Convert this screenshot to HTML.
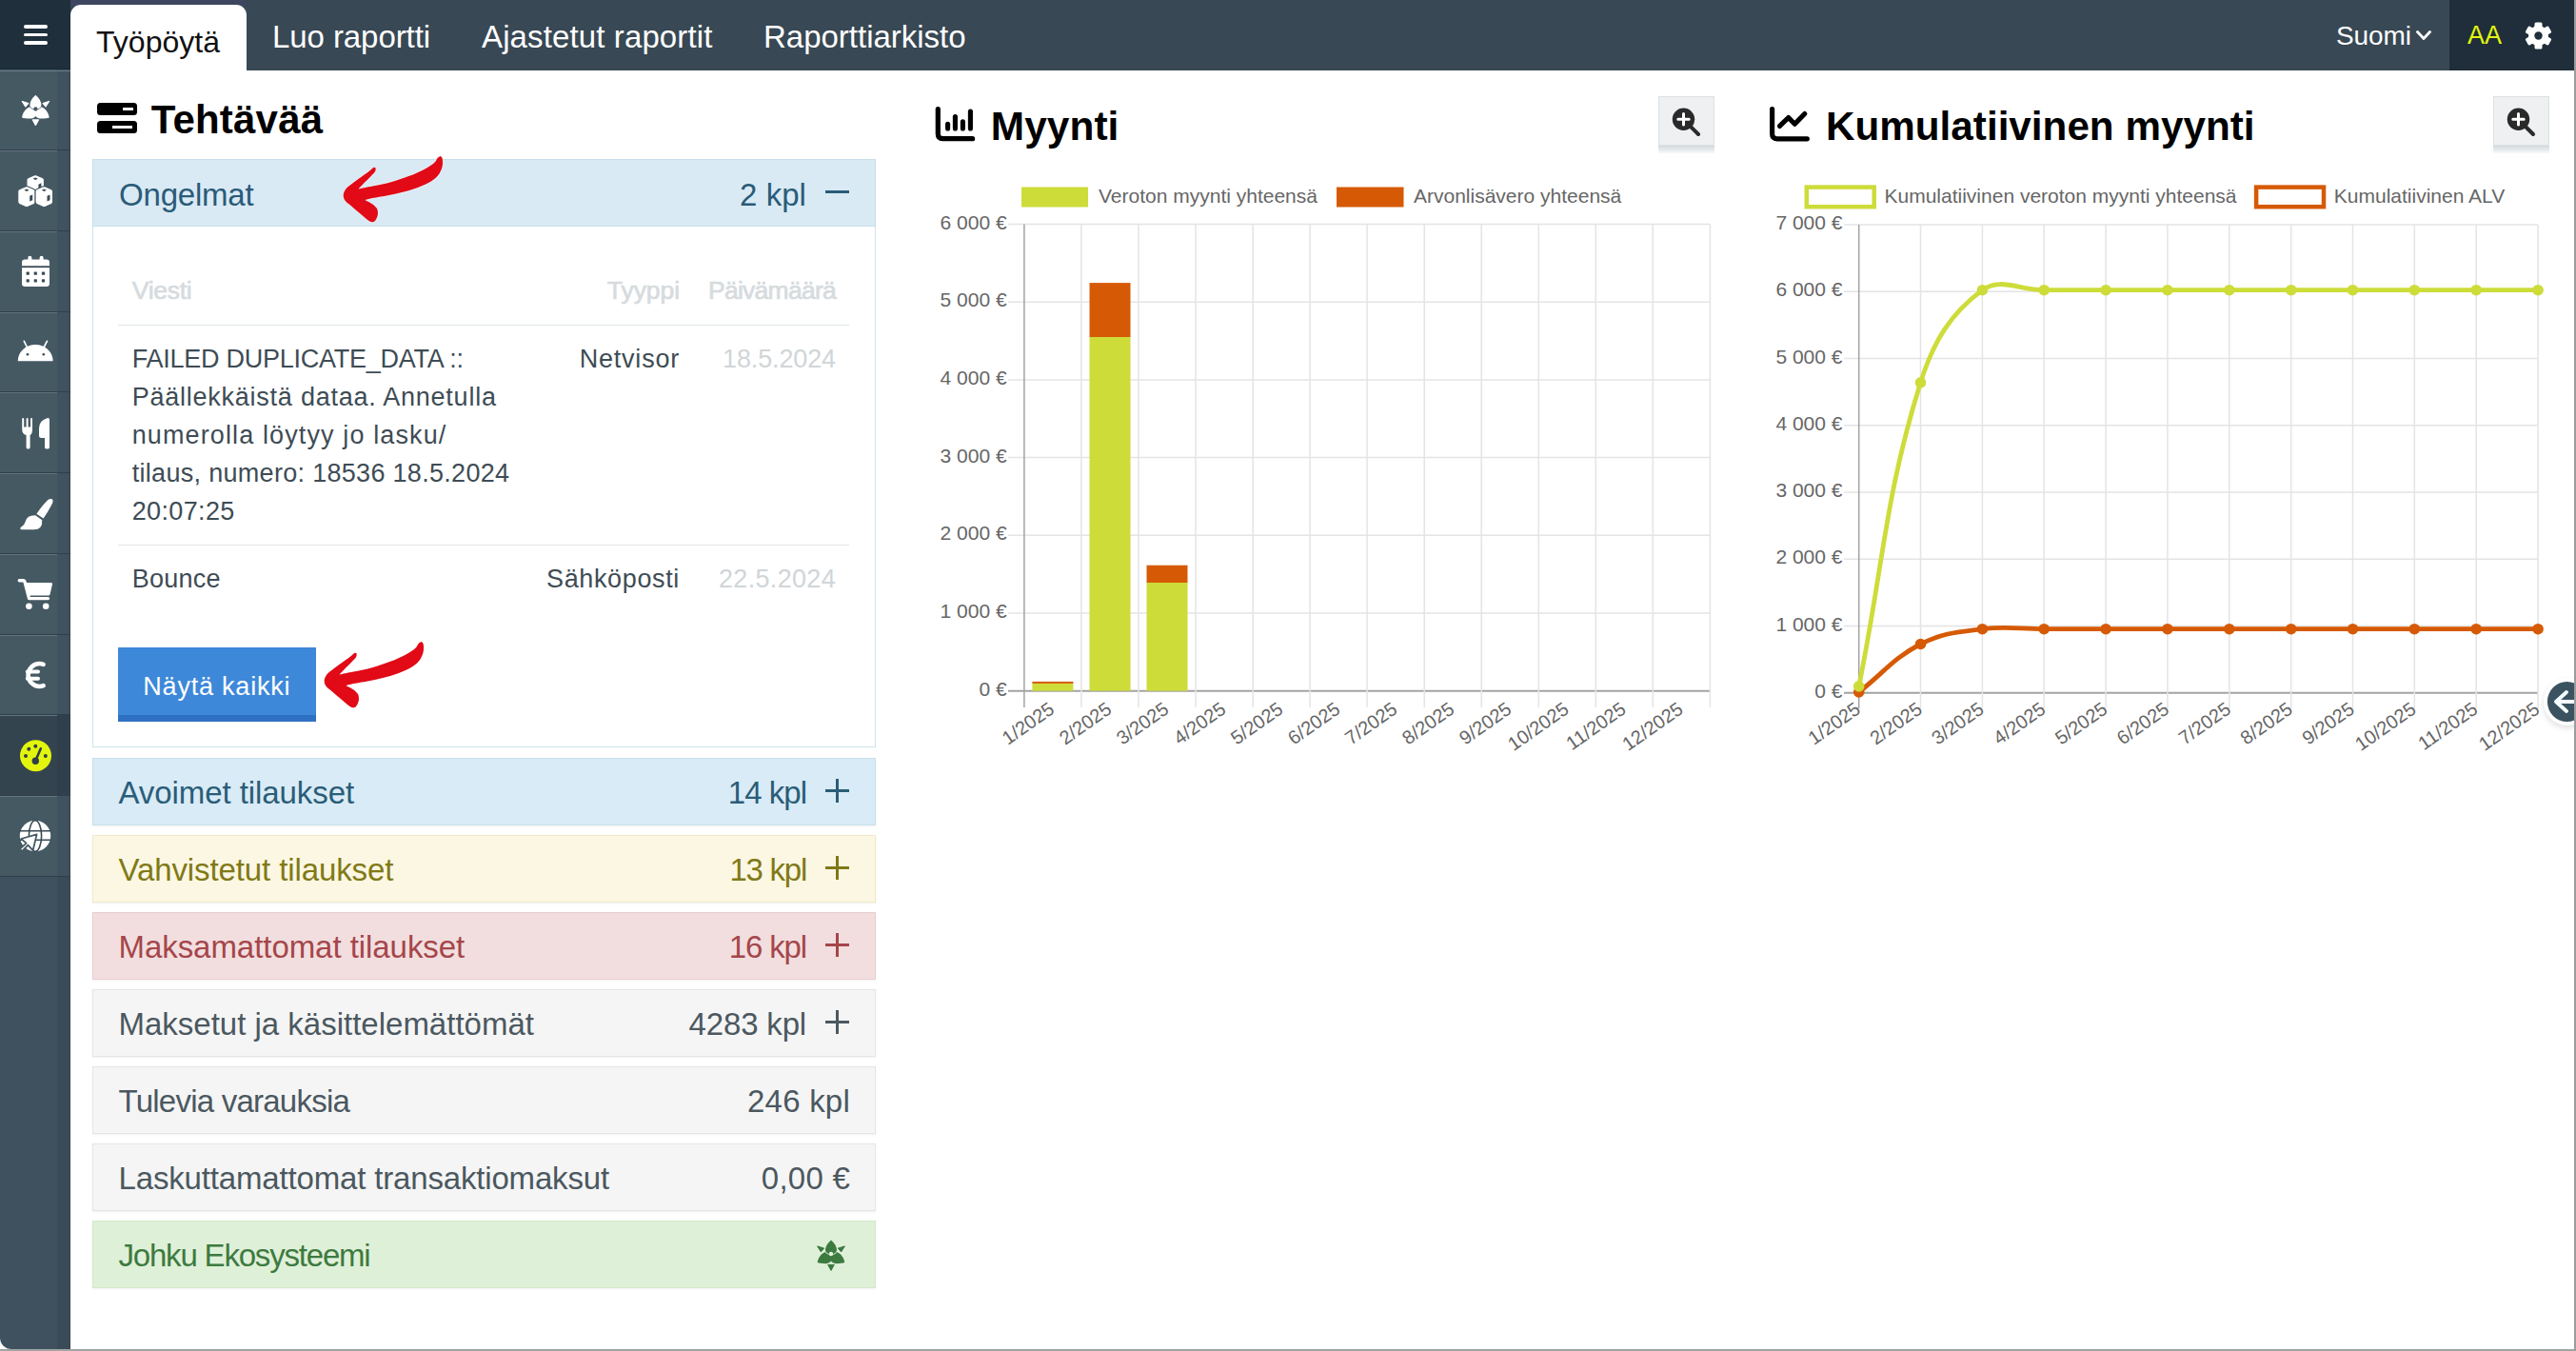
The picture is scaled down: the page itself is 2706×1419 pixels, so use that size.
<!DOCTYPE html>
<html><head><meta charset="utf-8"><style>
html,body{margin:0;padding:0;width:2706px;height:1419px;overflow:hidden;background:#fff;position:relative}
body{font-family:"Liberation Sans",sans-serif}
.t{position:absolute;line-height:1;white-space:nowrap}
svg text{font-family:"Liberation Sans",sans-serif}
</style></head><body>
<div style="position:absolute;left:0;top:0;width:74px;height:73px;background:#1f2f3b"></div>
<div style="position:absolute;left:25px;top:26.25px;width:25px;height:3.5px;border-radius:2px;background:#fff"></div>
<div style="position:absolute;left:25px;top:34.75px;width:25px;height:3.5px;border-radius:2px;background:#fff"></div>
<div style="position:absolute;left:25px;top:43.25px;width:25px;height:3.5px;border-radius:2px;background:#fff"></div>
<div style="position:absolute;left:0;top:73px;width:74px;height:1344px;background:linear-gradient(90deg,#3f515e 0,#3f515e 60px,#3a4b58 60px,#3a4b58 72px,#3d4750 72px);border-bottom-left-radius:12px"></div>
<div style="position:absolute;left:0;top:73px;width:74px;height:847.5px;background:linear-gradient(90deg,#455963 0,#455963 60px,#3f525f 60px,#3f525f 72px,#414a52 72px)"></div>
<div style="position:absolute;left:0;top:72px;width:74px;height:1px;background:#1b2a36"></div>
<div style="position:absolute;left:0;top:73.6px;width:74px;height:1.2px;background:#687b87"></div>
<div style="position:absolute;left:0;top:751.2px;width:74px;height:84.7px;background:linear-gradient(90deg,#34444f 0,#34444f 60px,#303f4b 60px)"></div>
<div style="position:absolute;left:0;top:157.4px;width:74px;height:1px;background:#2f404c"></div>
<div style="position:absolute;left:0;top:158.4px;width:60px;height:1px;background:#627480"></div>
<div style="position:absolute;left:0;top:242.1px;width:74px;height:1px;background:#2f404c"></div>
<div style="position:absolute;left:0;top:243.1px;width:60px;height:1px;background:#627480"></div>
<div style="position:absolute;left:0;top:326.8px;width:74px;height:1px;background:#2f404c"></div>
<div style="position:absolute;left:0;top:327.8px;width:60px;height:1px;background:#627480"></div>
<div style="position:absolute;left:0;top:411.4px;width:74px;height:1px;background:#2f404c"></div>
<div style="position:absolute;left:0;top:412.4px;width:60px;height:1px;background:#627480"></div>
<div style="position:absolute;left:0;top:496.1px;width:74px;height:1px;background:#2f404c"></div>
<div style="position:absolute;left:0;top:497.1px;width:60px;height:1px;background:#627480"></div>
<div style="position:absolute;left:0;top:580.8px;width:74px;height:1px;background:#2f404c"></div>
<div style="position:absolute;left:0;top:581.8px;width:60px;height:1px;background:#627480"></div>
<div style="position:absolute;left:0;top:665.5px;width:74px;height:1px;background:#2f404c"></div>
<div style="position:absolute;left:0;top:666.5px;width:60px;height:1px;background:#627480"></div>
<div style="position:absolute;left:0;top:750.2px;width:74px;height:1px;background:#2f404c"></div>
<div style="position:absolute;left:0;top:751.2px;width:60px;height:1px;background:#627480"></div>
<div style="position:absolute;left:0;top:834.8px;width:74px;height:1px;background:#2f404c"></div>
<div style="position:absolute;left:0;top:835.8px;width:60px;height:1px;background:#627480"></div>
<div style="position:absolute;left:0;top:919.5px;width:74px;height:1px;background:#2f404c"></div>
<div style="position:absolute;left:74px;top:0;width:2499px;height:73.6px;background:#384854"></div>
<div style="position:absolute;left:2573px;top:0;width:131px;height:73.6px;background:#1f2e3a"></div>
<div style="position:absolute;left:74px;top:0;width:185px;height:6px;background:#3d4560"></div>
<div style="position:absolute;left:74px;top:5px;width:185px;height:69px;background:#fff;border-radius:11px 11px 0 0"></div>
<div class="t" style="top:27.6px;font-size:32px;color:#111;font-weight:400;letter-spacing:0.018px;left:101.0px;">Työpöytä</div>
<div class="t" style="top:21.8px;font-size:33px;color:#fff;font-weight:400;letter-spacing:-0.078px;left:286.0px;">Luo raportti</div>
<div class="t" style="top:21.8px;font-size:33px;color:#fff;font-weight:400;letter-spacing:0.123px;left:506.0px;">Ajastetut raportit</div>
<div class="t" style="top:21.8px;font-size:33px;color:#fff;font-weight:400;letter-spacing:-0.01px;left:802.0px;">Raporttiarkisto</div>
<div class="t" style="top:24.3px;font-size:28px;color:#fff;font-weight:400;letter-spacing:-0.075px;left:2454.0px;">Suomi</div>
<svg style="position:absolute;left:2537px;top:30.5px" width="18" height="12" viewBox="0 0 18 12"><path d="M2.5 2.5 L9 9.5 L15.5 2.5" fill="none" stroke="#fff" stroke-width="2.8" stroke-linecap="round" stroke-linejoin="round"/></svg>
<div class="t" style="top:24.1px;font-size:27px;color:#e3f50f;font-weight:400;left:2592.0px;">AA</div>
<div style="position:absolute;left:0;top:1417px;width:2706px;height:2px;background:#a3a3a3"></div>
<div style="position:absolute;left:2704px;top:0;width:2px;height:1419px;background:#9c9c9c"></div>
<div style="position:absolute;left:102px;top:108.2px;width:42px;height:13.2px;background:#000;border-radius:3.5px"></div>
<div style="position:absolute;left:102px;top:127.2px;width:42px;height:12.8px;background:#000;border-radius:3.5px"></div>
<div style="position:absolute;left:128.5px;top:113.3px;width:11px;height:3.2px;background:#fff"></div>
<div style="position:absolute;left:117.8px;top:131.9px;width:21.5px;height:3.2px;background:#fff"></div>
<div class="t" style="top:105.0px;font-size:42px;color:#000;font-weight:700;letter-spacing:0.202px;left:158.7px;">Tehtävää</div>
<div style="position:absolute;left:97px;top:167px;width:821px;height:616px;border:1px solid #cfe5ec;background:#fff"></div>
<div style="position:absolute;left:97px;top:167px;width:823px;height:71px;background:#d9eaf5;border-bottom:1px solid #c6dde9;box-sizing:border-box;border:1px solid #c9dfea"></div>
<div class="t" style="top:188.1px;font-size:33px;color:#2b5b78;font-weight:400;letter-spacing:-0.197px;left:125.0px;">Ongelmat</div>
<div class="t" style="top:188.1px;font-size:33px;color:#2b5b78;font-weight:400;letter-spacing:0.056px;right:1859.0px;text-align:right;">2 kpl</div>
<div style="position:absolute;left:867px;top:200.3px;width:25px;height:3px;background:#2b5b78"></div>
<div class="t" style="top:291.6px;font-size:26.5px;color:#d6dbde;font-weight:400;letter-spacing:-0.255px;left:138.7px;-webkit-text-stroke:0.7px #d6dbde;">Viesti</div>
<div class="t" style="top:291.6px;font-size:26.5px;color:#d6dbde;font-weight:400;letter-spacing:-0.066px;right:1992.0px;text-align:right;-webkit-text-stroke:0.7px #d6dbde;">Tyyppi</div>
<div class="t" style="top:291.6px;font-size:26.5px;color:#d6dbde;font-weight:400;letter-spacing:-0.741px;right:1828.0px;text-align:right;-webkit-text-stroke:0.7px #d6dbde;">Päivämäärä</div>
<div style="position:absolute;left:124px;top:340.5px;width:768px;height:1.5px;background:#dfe5e8"></div>
<div class="t" style="top:364.1px;font-size:27px;color:#3e4c55;font-weight:400;letter-spacing:-0.255px;left:138.7px;">FAILED DUPLICATE_DATA ::</div>
<div class="t" style="top:404.1px;font-size:27px;color:#3e4c55;font-weight:400;letter-spacing:0.758px;left:138.7px;">Päällekkäistä dataa. Annetulla</div>
<div class="t" style="top:444.1px;font-size:27px;color:#3e4c55;font-weight:400;letter-spacing:1.118px;left:138.7px;">numerolla löytyy jo lasku/</div>
<div class="t" style="top:484.1px;font-size:27px;color:#3e4c55;font-weight:400;letter-spacing:0.304px;left:138.7px;">tilaus, numero: 18536 18.5.2024</div>
<div class="t" style="top:524.1px;font-size:27px;color:#3e4c55;font-weight:400;letter-spacing:0.361px;left:138.7px;">20:07:25</div>
<div class="t" style="top:364.1px;font-size:27px;color:#3e4c55;font-weight:400;letter-spacing:0.784px;right:1992.0px;text-align:right;">Netvisor</div>
<div class="t" style="top:364.1px;font-size:27px;color:#d0d5d8;font-weight:400;letter-spacing:-0.125px;right:1828.0px;text-align:right;">18.5.2024</div>
<div style="position:absolute;left:124px;top:571.5px;width:768px;height:1.5px;background:#dfe5e8"></div>
<div class="t" style="top:595.3px;font-size:27px;color:#3e4c55;font-weight:400;letter-spacing:0.237px;left:138.7px;">Bounce</div>
<div class="t" style="top:595.3px;font-size:27px;color:#3e4c55;font-weight:400;letter-spacing:0.641px;right:1992.0px;text-align:right;">Sähköposti</div>
<div class="t" style="top:595.3px;font-size:27px;color:#d0d5d8;font-weight:400;letter-spacing:0.319px;right:1828.0px;text-align:right;">22.5.2024</div>
<div style="position:absolute;left:124px;top:680px;width:208px;height:77.5px;background:#3d88d9;box-sizing:border-box;border-bottom:7px solid #2e70c2"></div>
<div class="t" style="top:707.5px;font-size:27px;color:#fff;font-weight:400;letter-spacing:0.788px;left:150.3px;">Näytä kaikki</div>
<div style="position:absolute;left:97px;top:795.5px;width:823px;height:71px;background:#d9ebf6;border:1px solid #c9dfeb;box-sizing:border-box;box-shadow:0 1px 2px rgba(0,0,0,.06)"></div>
<div class="t" style="top:815.9px;font-size:33px;color:#2a5d78;font-weight:400;letter-spacing:-0.079px;left:124.5px;">Avoimet tilaukset</div>
<div class="t" style="top:815.9px;font-size:33px;color:#2a5d78;font-weight:400;letter-spacing:-0.977px;right:1859.0px;text-align:right;">14 kpl</div>
<div style="position:absolute;left:867px;top:829.0px;width:25px;height:3px;background:#2a5d78"></div>
<div style="position:absolute;left:878px;top:818.0px;width:3px;height:25px;background:#2a5d78"></div>
<div style="position:absolute;left:97px;top:876.5px;width:823px;height:71px;background:#fcf7e3;border:1px solid #efe9c9;box-sizing:border-box;box-shadow:0 1px 2px rgba(0,0,0,.06)"></div>
<div class="t" style="top:896.9px;font-size:33px;color:#807916;font-weight:400;letter-spacing:-0.107px;left:124.5px;">Vahvistetut tilaukset</div>
<div class="t" style="top:896.9px;font-size:33px;color:#807916;font-weight:400;letter-spacing:-1.26px;right:1859.0px;text-align:right;">13 kpl</div>
<div style="position:absolute;left:867px;top:910.0px;width:25px;height:3px;background:#807916"></div>
<div style="position:absolute;left:878px;top:899.0px;width:3px;height:25px;background:#807916"></div>
<div style="position:absolute;left:97px;top:957.5px;width:823px;height:71px;background:#f2dedf;border:1px solid #e8ced0;box-sizing:border-box;box-shadow:0 1px 2px rgba(0,0,0,.06)"></div>
<div class="t" style="top:977.9px;font-size:33px;color:#a5464a;font-weight:400;letter-spacing:-0.055px;left:124.5px;">Maksamattomat tilaukset</div>
<div class="t" style="top:977.9px;font-size:33px;color:#a5464a;font-weight:400;letter-spacing:-1.144px;right:1859.0px;text-align:right;">16 kpl</div>
<div style="position:absolute;left:867px;top:991.0px;width:25px;height:3px;background:#a5464a"></div>
<div style="position:absolute;left:878px;top:980.0px;width:3px;height:25px;background:#a5464a"></div>
<div style="position:absolute;left:97px;top:1038.5px;width:823px;height:71px;background:#f5f5f5;border:1px solid #e5e5e5;box-sizing:border-box;box-shadow:0 1px 2px rgba(0,0,0,.06)"></div>
<div class="t" style="top:1058.9px;font-size:33px;color:#4b5860;font-weight:400;letter-spacing:-0.004px;left:124.5px;">Maksetut ja käsittelemättömät</div>
<div class="t" style="top:1058.9px;font-size:33px;color:#4b5860;font-weight:400;letter-spacing:-0.171px;right:1859.0px;text-align:right;">4283 kpl</div>
<div style="position:absolute;left:867px;top:1072.0px;width:25px;height:3px;background:#4b5860"></div>
<div style="position:absolute;left:878px;top:1061.0px;width:3px;height:25px;background:#4b5860"></div>
<div style="position:absolute;left:97px;top:1119.5px;width:823px;height:71px;background:#f5f5f5;border:1px solid #e5e5e5;box-sizing:border-box;box-shadow:0 1px 2px rgba(0,0,0,.06)"></div>
<div class="t" style="top:1139.9px;font-size:33px;color:#4b5860;font-weight:400;letter-spacing:-0.763px;left:124.5px;">Tulevia varauksia</div>
<div class="t" style="top:1139.9px;font-size:33px;color:#4b5860;font-weight:400;letter-spacing:0.225px;right:1813.0px;text-align:right;">246 kpl</div>
<div style="position:absolute;left:97px;top:1200.5px;width:823px;height:71px;background:#f5f5f5;border:1px solid #e5e5e5;box-sizing:border-box;box-shadow:0 1px 2px rgba(0,0,0,.06)"></div>
<div class="t" style="top:1220.9px;font-size:33px;color:#4b5860;font-weight:400;letter-spacing:-0.164px;left:124.5px;">Laskuttamattomat transaktiomaksut</div>
<div class="t" style="top:1220.9px;font-size:33px;color:#4b5860;font-weight:400;letter-spacing:0.242px;right:1813.0px;text-align:right;">0,00 €</div>
<div style="position:absolute;left:97px;top:1281.5px;width:823px;height:71px;background:#dff0d8;border:1px solid #d3e8ca;box-sizing:border-box;box-shadow:0 1px 2px rgba(0,0,0,.06)"></div>
<div class="t" style="top:1301.9px;font-size:33px;color:#3d7a40;font-weight:400;letter-spacing:-1.194px;left:124.5px;">Johku Ekosysteemi</div>
<svg style="position:absolute;left:350px;top:155px" width="130" height="90" viewBox="0 0 1951 1351"><path d="M1690 135 C1695 142 1717 149 1722 175 C1727 201 1729 252 1722 290 C1715 328 1700 367 1680 400 C1660 433 1638 460 1600 490 C1562 520 1517 549 1450 580 C1383 611 1292 648 1200 675 C1108 702 997 725 900 745 C803 765 687 782 620 795 C553 808 520 820 500 825 C518 835 579 863 610 885 C641 907 669 929 685 955 C701 981 706 1012 705 1040 C704 1068 692 1103 680 1125 C668 1147 653 1166 635 1172 C617 1178 602 1180 570 1160 C538 1140 485 1092 440 1055 C395 1018 341 970 300 935 C259 900 218 874 195 845 C172 816 162 788 160 760 C158 732 170 701 185 675 C200 649 214 636 250 605 C286 574 350 527 400 490 C450 453 511 414 550 385 C589 356 615 326 635 315 C655 304 664 312 668 322 C672 332 673 354 662 375 C651 396 627 417 600 445 C573 473 533 510 500 545 C467 580 417 634 400 652 C437 645 537 625 620 608 C703 591 803 575 900 548 C997 521 1110 483 1200 448 C1290 413 1375 374 1440 340 C1505 306 1556 274 1590 245 C1624 216 1628 183 1645 165 C1662 147 1682 140 1690 135 Z" fill="#e10a16" stroke="#fff" stroke-width="10" paint-order="stroke"/></svg>
<svg style="position:absolute;left:330px;top:665px" width="130" height="90" viewBox="0 0 1951 1351"><path d="M1690 135 C1695 142 1717 149 1722 175 C1727 201 1729 252 1722 290 C1715 328 1700 367 1680 400 C1660 433 1638 460 1600 490 C1562 520 1517 549 1450 580 C1383 611 1292 648 1200 675 C1108 702 997 725 900 745 C803 765 687 782 620 795 C553 808 520 820 500 825 C518 835 579 863 610 885 C641 907 669 929 685 955 C701 981 706 1012 705 1040 C704 1068 692 1103 680 1125 C668 1147 653 1166 635 1172 C617 1178 602 1180 570 1160 C538 1140 485 1092 440 1055 C395 1018 341 970 300 935 C259 900 218 874 195 845 C172 816 162 788 160 760 C158 732 170 701 185 675 C200 649 214 636 250 605 C286 574 350 527 400 490 C450 453 511 414 550 385 C589 356 615 326 635 315 C655 304 664 312 668 322 C672 332 673 354 662 375 C651 396 627 417 600 445 C573 473 533 510 500 545 C467 580 417 634 400 652 C437 645 537 625 620 608 C703 591 803 575 900 548 C997 521 1110 483 1200 448 C1290 413 1375 374 1440 340 C1505 306 1556 274 1590 245 C1624 216 1628 183 1645 165 C1662 147 1682 140 1690 135 Z" fill="#e10a16" stroke="#fff" stroke-width="10" paint-order="stroke"/></svg>
<svg style="position:absolute;left:0;top:0" width="2706" height="1419" viewBox="0 0 2706 1419" font-family="Liberation Sans">
<line x1="1059" y1="235.6" x2="1796.4" y2="235.6" stroke="#e4e4e4" stroke-width="1.5"/>
<text x="1057.7" y="233.2" text-anchor="end" dominant-baseline="central" font-size="21" fill="#666">6 000 €</text>
<line x1="1059" y1="317.3" x2="1796.4" y2="317.3" stroke="#e4e4e4" stroke-width="1.5"/>
<text x="1057.7" y="314.9" text-anchor="end" dominant-baseline="central" font-size="21" fill="#666">5 000 €</text>
<line x1="1059" y1="399.0" x2="1796.4" y2="399.0" stroke="#e4e4e4" stroke-width="1.5"/>
<text x="1057.7" y="396.6" text-anchor="end" dominant-baseline="central" font-size="21" fill="#666">4 000 €</text>
<line x1="1059" y1="480.6" x2="1796.4" y2="480.6" stroke="#e4e4e4" stroke-width="1.5"/>
<text x="1057.7" y="478.2" text-anchor="end" dominant-baseline="central" font-size="21" fill="#666">3 000 €</text>
<line x1="1059" y1="562.3" x2="1796.4" y2="562.3" stroke="#e4e4e4" stroke-width="1.5"/>
<text x="1057.7" y="559.9" text-anchor="end" dominant-baseline="central" font-size="21" fill="#666">2 000 €</text>
<line x1="1059" y1="644.0" x2="1796.4" y2="644.0" stroke="#e4e4e4" stroke-width="1.5"/>
<text x="1057.7" y="641.6" text-anchor="end" dominant-baseline="central" font-size="21" fill="#666">1 000 €</text>
<line x1="1059" y1="725.7" x2="1796.4" y2="725.7" stroke="#a3a3a3" stroke-width="2"/>
<text x="1057.7" y="723.3" text-anchor="end" dominant-baseline="central" font-size="21" fill="#666">0 €</text>
<line x1="1075.9" y1="235.6" x2="1075.9" y2="743" stroke="#a3a3a3" stroke-width="1.5"/>
<line x1="1135.9" y1="235.6" x2="1135.9" y2="743" stroke="#e4e4e4" stroke-width="1.5"/>
<line x1="1196.0" y1="235.6" x2="1196.0" y2="743" stroke="#e4e4e4" stroke-width="1.5"/>
<line x1="1256.0" y1="235.6" x2="1256.0" y2="743" stroke="#e4e4e4" stroke-width="1.5"/>
<line x1="1316.1" y1="235.6" x2="1316.1" y2="743" stroke="#e4e4e4" stroke-width="1.5"/>
<line x1="1376.1" y1="235.6" x2="1376.1" y2="743" stroke="#e4e4e4" stroke-width="1.5"/>
<line x1="1436.1" y1="235.6" x2="1436.1" y2="743" stroke="#e4e4e4" stroke-width="1.5"/>
<line x1="1496.2" y1="235.6" x2="1496.2" y2="743" stroke="#e4e4e4" stroke-width="1.5"/>
<line x1="1556.2" y1="235.6" x2="1556.2" y2="743" stroke="#e4e4e4" stroke-width="1.5"/>
<line x1="1616.3" y1="235.6" x2="1616.3" y2="743" stroke="#e4e4e4" stroke-width="1.5"/>
<line x1="1676.3" y1="235.6" x2="1676.3" y2="743" stroke="#e4e4e4" stroke-width="1.5"/>
<line x1="1736.3" y1="235.6" x2="1736.3" y2="743" stroke="#e4e4e4" stroke-width="1.5"/>
<line x1="1796.4" y1="235.6" x2="1796.4" y2="743" stroke="#e4e4e4" stroke-width="1.5"/>
<rect x="1084.4" y="717.9" width="43" height="7.8" fill="#cddc39"/>
<rect x="1084.4" y="715.9" width="43" height="2.0" fill="#d65a05"/>
<rect x="1144.5" y="354.0" width="43" height="371.6" fill="#cddc39"/>
<rect x="1144.5" y="297.1" width="43" height="56.9" fill="#d65a05"/>
<rect x="1204.5" y="612.0" width="43" height="113.7" fill="#cddc39"/>
<rect x="1204.5" y="593.7" width="43" height="18.3" fill="#d65a05"/>
<text x="0" y="0" transform="translate(1104.9,742.1) rotate(-35)" text-anchor="end" dominant-baseline="central" font-size="20" fill="#666">1/2025</text>
<text x="0" y="0" transform="translate(1165.0,742.1) rotate(-35)" text-anchor="end" dominant-baseline="central" font-size="20" fill="#666">2/2025</text>
<text x="0" y="0" transform="translate(1225.0,742.1) rotate(-35)" text-anchor="end" dominant-baseline="central" font-size="20" fill="#666">3/2025</text>
<text x="0" y="0" transform="translate(1285.0,742.1) rotate(-35)" text-anchor="end" dominant-baseline="central" font-size="20" fill="#666">4/2025</text>
<text x="0" y="0" transform="translate(1345.1,742.1) rotate(-35)" text-anchor="end" dominant-baseline="central" font-size="20" fill="#666">5/2025</text>
<text x="0" y="0" transform="translate(1405.1,742.1) rotate(-35)" text-anchor="end" dominant-baseline="central" font-size="20" fill="#666">6/2025</text>
<text x="0" y="0" transform="translate(1465.2,742.1) rotate(-35)" text-anchor="end" dominant-baseline="central" font-size="20" fill="#666">7/2025</text>
<text x="0" y="0" transform="translate(1525.2,742.1) rotate(-35)" text-anchor="end" dominant-baseline="central" font-size="20" fill="#666">8/2025</text>
<text x="0" y="0" transform="translate(1585.2,742.1) rotate(-35)" text-anchor="end" dominant-baseline="central" font-size="20" fill="#666">9/2025</text>
<text x="0" y="0" transform="translate(1645.3,742.1) rotate(-35)" text-anchor="end" dominant-baseline="central" font-size="20" fill="#666">10/2025</text>
<text x="0" y="0" transform="translate(1705.3,742.1) rotate(-35)" text-anchor="end" dominant-baseline="central" font-size="20" fill="#666">11/2025</text>
<text x="0" y="0" transform="translate(1765.4,742.1) rotate(-35)" text-anchor="end" dominant-baseline="central" font-size="20" fill="#666">12/2025</text>
<rect x="1073" y="196.5" width="70" height="21" fill="#cddc39"/>
<text x="1154" y="205.5" dominant-baseline="central" font-size="21" fill="#666">Veroton myynti yhteensä</text>
<rect x="1404" y="196.5" width="70.5" height="21" fill="#d65a05"/>
<text x="1485" y="205.5" dominant-baseline="central" font-size="21" fill="#666">Arvonlisävero yhteensä</text>
<line x1="1937" y1="236.0" x2="2666" y2="236.0" stroke="#e4e4e4" stroke-width="1.5"/>
<text x="1935.5" y="233.6" text-anchor="end" dominant-baseline="central" font-size="21" fill="#666">7 000 €</text>
<line x1="1937" y1="306.2" x2="2666" y2="306.2" stroke="#e4e4e4" stroke-width="1.5"/>
<text x="1935.5" y="303.8" text-anchor="end" dominant-baseline="central" font-size="21" fill="#666">6 000 €</text>
<line x1="1937" y1="376.5" x2="2666" y2="376.5" stroke="#e4e4e4" stroke-width="1.5"/>
<text x="1935.5" y="374.1" text-anchor="end" dominant-baseline="central" font-size="21" fill="#666">5 000 €</text>
<line x1="1937" y1="446.7" x2="2666" y2="446.7" stroke="#e4e4e4" stroke-width="1.5"/>
<text x="1935.5" y="444.3" text-anchor="end" dominant-baseline="central" font-size="21" fill="#666">4 000 €</text>
<line x1="1937" y1="517.0" x2="2666" y2="517.0" stroke="#e4e4e4" stroke-width="1.5"/>
<text x="1935.5" y="514.6" text-anchor="end" dominant-baseline="central" font-size="21" fill="#666">3 000 €</text>
<line x1="1937" y1="587.2" x2="2666" y2="587.2" stroke="#e4e4e4" stroke-width="1.5"/>
<text x="1935.5" y="584.8" text-anchor="end" dominant-baseline="central" font-size="21" fill="#666">2 000 €</text>
<line x1="1937" y1="657.4" x2="2666" y2="657.4" stroke="#e4e4e4" stroke-width="1.5"/>
<text x="1935.5" y="655.0" text-anchor="end" dominant-baseline="central" font-size="21" fill="#666">1 000 €</text>
<line x1="1937" y1="727.7" x2="2666" y2="727.7" stroke="#a3a3a3" stroke-width="2"/>
<text x="1935.5" y="725.3" text-anchor="end" dominant-baseline="central" font-size="21" fill="#666">0 €</text>
<line x1="1952.7" y1="236.0" x2="1952.7" y2="744" stroke="#a3a3a3" stroke-width="1.5"/>
<line x1="2017.5" y1="236.0" x2="2017.5" y2="744" stroke="#e4e4e4" stroke-width="1.5"/>
<line x1="2082.4" y1="236.0" x2="2082.4" y2="744" stroke="#e4e4e4" stroke-width="1.5"/>
<line x1="2147.2" y1="236.0" x2="2147.2" y2="744" stroke="#e4e4e4" stroke-width="1.5"/>
<line x1="2212.1" y1="236.0" x2="2212.1" y2="744" stroke="#e4e4e4" stroke-width="1.5"/>
<line x1="2276.9" y1="236.0" x2="2276.9" y2="744" stroke="#e4e4e4" stroke-width="1.5"/>
<line x1="2341.8" y1="236.0" x2="2341.8" y2="744" stroke="#e4e4e4" stroke-width="1.5"/>
<line x1="2406.7" y1="236.0" x2="2406.7" y2="744" stroke="#e4e4e4" stroke-width="1.5"/>
<line x1="2471.5" y1="236.0" x2="2471.5" y2="744" stroke="#e4e4e4" stroke-width="1.5"/>
<line x1="2536.3" y1="236.0" x2="2536.3" y2="744" stroke="#e4e4e4" stroke-width="1.5"/>
<line x1="2601.2" y1="236.0" x2="2601.2" y2="744" stroke="#e4e4e4" stroke-width="1.5"/>
<line x1="2666.1" y1="236.0" x2="2666.1" y2="744" stroke="#e4e4e4" stroke-width="1.5"/>
<path d="M1952.7 727.0 C1978.6 706.8 1988.9 691.2 2017.5 676.5 C2040.8 664.7 2056.1 663.9 2082.4 660.7 C2108.0 657.6 2121.3 660.7 2147.2 660.7 C2173.2 660.7 2186.2 660.7 2212.1 660.7 C2238.0 660.7 2251.0 660.7 2276.9 660.7 C2302.9 660.7 2315.9 660.7 2341.8 660.7 C2367.7 660.7 2380.7 660.7 2406.7 660.7 C2432.6 660.7 2445.6 660.7 2471.5 660.7 C2497.4 660.7 2510.4 660.7 2536.3 660.7 C2562.3 660.7 2575.3 660.7 2601.2 660.7 C2627.1 660.7 2640.1 660.7 2666.1 660.7" fill="none" stroke="#d65a05" stroke-width="4.8"/>
<circle cx="1952.7" cy="727.0" r="5.8" fill="#d65a05"/>
<circle cx="2017.5" cy="676.5" r="5.8" fill="#d65a05"/>
<circle cx="2082.4" cy="660.7" r="5.8" fill="#d65a05"/>
<circle cx="2147.2" cy="660.7" r="5.8" fill="#d65a05"/>
<circle cx="2212.1" cy="660.7" r="5.8" fill="#d65a05"/>
<circle cx="2276.9" cy="660.7" r="5.8" fill="#d65a05"/>
<circle cx="2341.8" cy="660.7" r="5.8" fill="#d65a05"/>
<circle cx="2406.7" cy="660.7" r="5.8" fill="#d65a05"/>
<circle cx="2471.5" cy="660.7" r="5.8" fill="#d65a05"/>
<circle cx="2536.3" cy="660.7" r="5.8" fill="#d65a05"/>
<circle cx="2601.2" cy="660.7" r="5.8" fill="#d65a05"/>
<circle cx="2666.1" cy="660.7" r="5.8" fill="#d65a05"/>
<path d="M1952.7 720.9 C1978.6 593.3 1979.4 524.3 2017.5 401.8 C2031.2 357.8 2049.0 329.7 2082.4 304.7 C2100.9 290.8 2121.3 304.7 2147.2 304.7 C2173.2 304.7 2186.2 304.7 2212.1 304.7 C2238.0 304.7 2251.0 304.7 2276.9 304.7 C2302.9 304.7 2315.9 304.7 2341.8 304.7 C2367.7 304.7 2380.7 304.7 2406.7 304.7 C2432.6 304.7 2445.6 304.7 2471.5 304.7 C2497.4 304.7 2510.4 304.7 2536.3 304.7 C2562.3 304.7 2575.3 304.7 2601.2 304.7 C2627.1 304.7 2640.1 304.7 2666.1 304.7" fill="none" stroke="#cddc39" stroke-width="4.8"/>
<circle cx="1952.7" cy="720.9" r="5.8" fill="#cddc39"/>
<circle cx="2017.5" cy="401.8" r="5.8" fill="#cddc39"/>
<circle cx="2082.4" cy="304.7" r="5.8" fill="#cddc39"/>
<circle cx="2147.2" cy="304.7" r="5.8" fill="#cddc39"/>
<circle cx="2212.1" cy="304.7" r="5.8" fill="#cddc39"/>
<circle cx="2276.9" cy="304.7" r="5.8" fill="#cddc39"/>
<circle cx="2341.8" cy="304.7" r="5.8" fill="#cddc39"/>
<circle cx="2406.7" cy="304.7" r="5.8" fill="#cddc39"/>
<circle cx="2471.5" cy="304.7" r="5.8" fill="#cddc39"/>
<circle cx="2536.3" cy="304.7" r="5.8" fill="#cddc39"/>
<circle cx="2601.2" cy="304.7" r="5.8" fill="#cddc39"/>
<circle cx="2666.1" cy="304.7" r="5.8" fill="#cddc39"/>
<text x="0" y="0" transform="translate(1951.7,742.1) rotate(-35)" text-anchor="end" dominant-baseline="central" font-size="20" fill="#666">1/2025</text>
<text x="0" y="0" transform="translate(2016.5,742.1) rotate(-35)" text-anchor="end" dominant-baseline="central" font-size="20" fill="#666">2/2025</text>
<text x="0" y="0" transform="translate(2081.4,742.1) rotate(-35)" text-anchor="end" dominant-baseline="central" font-size="20" fill="#666">3/2025</text>
<text x="0" y="0" transform="translate(2146.2,742.1) rotate(-35)" text-anchor="end" dominant-baseline="central" font-size="20" fill="#666">4/2025</text>
<text x="0" y="0" transform="translate(2211.1,742.1) rotate(-35)" text-anchor="end" dominant-baseline="central" font-size="20" fill="#666">5/2025</text>
<text x="0" y="0" transform="translate(2275.9,742.1) rotate(-35)" text-anchor="end" dominant-baseline="central" font-size="20" fill="#666">6/2025</text>
<text x="0" y="0" transform="translate(2340.8,742.1) rotate(-35)" text-anchor="end" dominant-baseline="central" font-size="20" fill="#666">7/2025</text>
<text x="0" y="0" transform="translate(2405.7,742.1) rotate(-35)" text-anchor="end" dominant-baseline="central" font-size="20" fill="#666">8/2025</text>
<text x="0" y="0" transform="translate(2470.5,742.1) rotate(-35)" text-anchor="end" dominant-baseline="central" font-size="20" fill="#666">9/2025</text>
<text x="0" y="0" transform="translate(2535.3,742.1) rotate(-35)" text-anchor="end" dominant-baseline="central" font-size="20" fill="#666">10/2025</text>
<text x="0" y="0" transform="translate(2600.2,742.1) rotate(-35)" text-anchor="end" dominant-baseline="central" font-size="20" fill="#666">11/2025</text>
<text x="0" y="0" transform="translate(2665.1,742.1) rotate(-35)" text-anchor="end" dominant-baseline="central" font-size="20" fill="#666">12/2025</text>
<rect x="1897.8" y="196.6" width="70.9" height="20.6" fill="#fff" stroke="#cddc39" stroke-width="4.5"/>
<text x="1979.5" y="205.5" dominant-baseline="central" font-size="21" fill="#666">Kumulatiivinen veroton myynti yhteensä</text>
<rect x="2370.1" y="196.6" width="70.9" height="20.6" fill="#fff" stroke="#d65a05" stroke-width="4.5"/>
<text x="2451.8" y="205.5" dominant-baseline="central" font-size="21" fill="#666">Kumulatiivinen ALV</text>
</svg>
<div class="t" style="top:111.9px;font-size:42.4px;color:#000;font-weight:700;letter-spacing:0.056px;left:1040.8px;">Myynti</div>
<div class="t" style="top:112.1px;font-size:42.2px;color:#000;font-weight:700;letter-spacing:0.02px;left:1918.0px;">Kumulatiivinen myynti</div>
<svg style="position:absolute;left:981px;top:112px" width="46" height="38" viewBox="0 0 46 38"><path d="M4.3 2.6 V28.6 Q4.3 33.7 9.4 33.7 H40.6" fill="none" stroke="#000" stroke-width="5.2" stroke-linecap="round" stroke-linejoin="round"/><rect x="12.05" y="15.8" width="5.1" height="9.8" rx="2.55"/><rect x="19.85" y="8" width="5.1" height="17.6" rx="2.55"/><rect x="27.85" y="13.2" width="5.1" height="12.4" rx="2.55"/><rect x="35.85" y="2.5" width="5.1" height="23.1" rx="2.55"/></svg>
<svg style="position:absolute;left:1859px;top:112px" width="46" height="38" viewBox="0 0 46 38"><path d="M2.6 2.6 V28.6 Q2.6 33.8 7.8 33.8 H39.3" fill="none" stroke="#000" stroke-width="5.2" stroke-linecap="round" stroke-linejoin="round"/><path d="M10.5 20.4 L19.7 11.5 L26.3 18.2 L36.8 7.5" fill="none" stroke="#000" stroke-width="5.2" stroke-linecap="round" stroke-linejoin="round"/></svg>
<div style="position:absolute;left:1742px;top:101px;width:58.5px;height:52px;background:#eef0f2;border:1px solid #dde1e4;box-sizing:border-box;"></div>
<div style="position:absolute;left:1742px;top:153px;width:58.5px;height:8px;background:linear-gradient(#d3d9dd,rgba(220,225,228,0.2))"></div>
<svg style="position:absolute;left:1742px;top:101px" width="58.5" height="52" viewBox="0 0 58.5 52"><circle cx="26.5" cy="24.3" r="11.7" fill="#2a2a2a"/><path d="M33 31 L42 40" stroke="#2a2a2a" stroke-width="4" stroke-linecap="round"/><path d="M26.5 18.6 V30 M20.8 24.3 H32.2" stroke="#fff" stroke-width="3" stroke-linecap="round"/></svg>
<div style="position:absolute;left:2619.3px;top:101px;width:58.5px;height:52px;background:#eef0f2;border:1px solid #dde1e4;box-sizing:border-box;"></div>
<div style="position:absolute;left:2619.3px;top:153px;width:58.5px;height:8px;background:linear-gradient(#d3d9dd,rgba(220,225,228,0.2))"></div>
<svg style="position:absolute;left:2619.3px;top:101px" width="58.5" height="52" viewBox="0 0 58.5 52"><circle cx="26.5" cy="24.3" r="11.7" fill="#2a2a2a"/><path d="M33 31 L42 40" stroke="#2a2a2a" stroke-width="4" stroke-linecap="round"/><path d="M26.5 18.6 V30 M20.8 24.3 H32.2" stroke="#fff" stroke-width="3" stroke-linecap="round"/></svg>
<div style="position:absolute;left:2672px;top:712px;width:50px;height:50px;border-radius:50%;background:#fff;box-shadow:0 3px 6px rgba(0,0,0,.12)"></div>
<div style="position:absolute;left:2676px;top:716.3px;width:41.4px;height:41.4px;border-radius:50%;background:#3b5360"></div>
<svg style="position:absolute;left:2680px;top:722px" width="26" height="30" viewBox="0 0 26 30"><path d="M16 5 L5 15 L16 25 M5 15 H26" fill="none" stroke="#f4fbff" stroke-width="3.8" stroke-linecap="round" stroke-linejoin="round"/></svg>
<div style="position:absolute;left:2704px;top:0;width:2px;height:1419px;background:#9c9c9c"></div>
<svg style="position:absolute;left:2651px;top:22px" width="31" height="31" viewBox="-15.5 -15.5 31 31"><g fill="#fff"><rect x="-4" y="-14" width="8" height="8" rx="1.5" transform="rotate(0)"/><rect x="-4" y="-14" width="8" height="8" rx="1.5" transform="rotate(60)"/><rect x="-4" y="-14" width="8" height="8" rx="1.5" transform="rotate(120)"/><rect x="-4" y="-14" width="8" height="8" rx="1.5" transform="rotate(180)"/><rect x="-4" y="-14" width="8" height="8" rx="1.5" transform="rotate(240)"/><rect x="-4" y="-14" width="8" height="8" rx="1.5" transform="rotate(300)"/><circle r="10.5"/></g><circle r="4.2" fill="#1f2e3a"/></svg>
<svg style="position:absolute;left:0;top:0" width="74" height="1419" viewBox="0 0 74 1419"><g transform="translate(37.4,114.6) scale(1.0)"><path d="M-14.4 -8.3 L-7.4 -6.1 L-10.6 -2.3 Z M14.4 -8.3 L7.4 -6.1 L10.6 -2.3 Z M-3.3 11.2 L3.3 11.2 L0 17.3 Z" fill="#fff" stroke="#fff" stroke-width="1" stroke-linejoin="round"/><path d="M0 7.4 C-1.5 9.4 -3.5 10 -6 10 C-9.5 10 -12.8 9.6 -14.3 8.9 C-13.8 4.5 -11 0 -7 -1.8 C-4.5 -2.8 -2 -2 0 -0.4 C2 -2 4.5 -2.8 7 -1.8 C11 0 13.8 4.5 14.3 8.9 C12.8 9.6 9.5 10 6 10 C3.5 10 1.5 9.4 0 7.4 Z" fill="#fff"/><path d="M0 -14.8 C3.6 -11.6 6 -7.8 6 -4.6 C6 -1.6 3.4 0.2 0 0.2 C-3.4 0.2 -6 -1.6 -6 -4.6 C-6 -7.8 -3.6 -11.6 0 -14.8 Z" fill="#fff" stroke="#455963" stroke-width="1.3" paint-order="stroke"/><circle cy="-0.2" r="2.2" fill="#455963"/></g><g transform="translate(37.2,194.5)"><path d="M-9.3 -5.5 Q-9.3 -7.2 -7.8 -7.9 L-1.5 -10.6 Q0 -11.2 1.5 -10.6 L7.8 -7.9 Q9.3 -7.2 9.3 -5.5 V5.5 Q9.3 7.2 7.8 7.9 L1.5 10.6 Q0 11.2 -1.5 10.6 L-7.8 7.9 Q-9.3 7.2 -9.3 5.5 Z" fill="#fff" stroke="#455963" stroke-width="1.2"/><path d="M-2.6 -6.8 L0 -8 L2.6 -6.8 L0 -5.6 Z" fill="#3a4a55"/><path d="M3.2 -0.8 L6.2 -2.2 V3.6 L3.2 5 Z" fill="#3a4a55"/></g><g transform="translate(28.0,206.6)"><path d="M-9.3 -5.5 Q-9.3 -7.2 -7.8 -7.9 L-1.5 -10.6 Q0 -11.2 1.5 -10.6 L7.8 -7.9 Q9.3 -7.2 9.3 -5.5 V5.5 Q9.3 7.2 7.8 7.9 L1.5 10.6 Q0 11.2 -1.5 10.6 L-7.8 7.9 Q-9.3 7.2 -9.3 5.5 Z" fill="#fff" stroke="#455963" stroke-width="1.2"/><path d="M-2.6 -6.8 L0 -8 L2.6 -6.8 L0 -5.6 Z" fill="#3a4a55"/><path d="M3.2 -0.8 L6.2 -2.2 V3.6 L3.2 5 Z" fill="#3a4a55"/></g><g transform="translate(46.3,206.6)"><path d="M-9.3 -5.5 Q-9.3 -7.2 -7.8 -7.9 L-1.5 -10.6 Q0 -11.2 1.5 -10.6 L7.8 -7.9 Q9.3 -7.2 9.3 -5.5 V5.5 Q9.3 7.2 7.8 7.9 L1.5 10.6 Q0 11.2 -1.5 10.6 L-7.8 7.9 Q-9.3 7.2 -9.3 5.5 Z" fill="#fff" stroke="#455963" stroke-width="1.2"/><path d="M-2.6 -6.8 L0 -8 L2.6 -6.8 L0 -5.6 Z" fill="#3a4a55"/><path d="M3.2 -0.8 L6.2 -2.2 V3.6 L3.2 5 Z" fill="#3a4a55"/></g><rect x="23" y="272.5" width="29" height="28.5" rx="3.2" fill="#fff"/><rect x="29.4" y="268.8" width="4" height="7" rx="2" fill="#fff"/><rect x="41.6" y="268.8" width="4" height="7" rx="2" fill="#fff"/><rect x="23" y="279.3" width="29" height="1.8" fill="#3a4a55"/><rect x="27.599999999999998" y="285.59999999999997" width="3.2" height="3.2" rx="0.6" fill="#3a4a55"/><rect x="27.599999999999998" y="293.2" width="3.2" height="3.2" rx="0.6" fill="#3a4a55"/><rect x="35.699999999999996" y="285.59999999999997" width="3.2" height="3.2" rx="0.6" fill="#3a4a55"/><rect x="35.699999999999996" y="293.2" width="3.2" height="3.2" rx="0.6" fill="#3a4a55"/><rect x="43.9" y="285.59999999999997" width="3.2" height="3.2" rx="0.6" fill="#3a4a55"/><rect x="43.9" y="293.2" width="3.2" height="3.2" rx="0.6" fill="#3a4a55"/><path d="M18.8 379.2 A18.4 17.3 0 0 1 55.6 379.2 Z" fill="#fff"/><path d="M28.3 364.5 L25.3 358.3 M46.2 364.5 L49.4 358.3" stroke="#fff" stroke-width="1.7" stroke-linecap="round"/><circle cx="29" cy="372.3" r="1.3" fill="#3a4a55"/><circle cx="45.8" cy="372.3" r="1.3" fill="#3a4a55"/><path d="M23.2 440 Q23.2 439 24.2 439 Q25.2 439 25.2 440 V448.5 H27.6 V440 Q27.6 439 28.6 439 Q29.6 439 29.6 440 V448.5 H32 V440 Q32 439 33 439 Q34 439 34 440 V451 Q34 456 31.6 457 V470 Q31.6 471.5 29.6 471.5 Q27.6 471.5 27.6 470 V457 Q23.2 456 23.2 451 Z" fill="#fff"/><path d="M52 440.5 V470 Q52 471.5 49.5 471.5 Q47 471.5 47 470 V460 H43.5 Q41 460 41 457.5 V450 Q41 441.5 50 439 Q52 438.8 52 440.5 Z" fill="#fff"/><path d="M51 524.6 Q56.5 522.2 55.3 528 Q52 535 45.6 544.6 L38.4 539.8 Q45 530 51 524.6 Z" fill="#fff"/><path d="M37.2 541.2 L44.2 546.2 Q45 556.2 35.5 556.2 H22.6 Q19.8 555.5 22.6 553.2 Q25.8 551.5 26.8 547.5 Q28.5 541 37.2 541.2 Z" fill="#fff"/><path d="M20.3 609.8 H24.3 Q25.6 609.8 26 611 L30.6 628.6 H50.5" fill="none" stroke="#fff" stroke-width="3.4" stroke-linecap="round" stroke-linejoin="round"/><path d="M26.5 612 H53.8 Q55.3 612 55 613.5 L52.6 624 Q52.2 625.6 50.6 625.6 H30 Z" fill="#fff"/><circle cx="30.4" cy="636.8" r="3.3" fill="#fff"/><circle cx="48.2" cy="636.8" r="3.3" fill="#fff"/><path d="M45.6 697.8 Q43.5 697 41.6 697 A12 12 0 0 0 41.6 721 Q43.5 721 45.6 720.2" fill="none" stroke="#fff" stroke-width="4.6" stroke-linecap="round"/><path d="M28.8 705.4 H40 M28.8 712.8 H40" stroke="#fff" stroke-width="4" stroke-linecap="round"/><circle cx="37.5" cy="793.7" r="16.5" fill="#e3f50c"/><g fill="#2f3e4a"><circle cx="37.3" cy="783.8" r="2"/><circle cx="30.3" cy="786.8" r="2"/><circle cx="27" cy="794" r="2"/><circle cx="47.8" cy="794" r="2"/><circle cx="37.3" cy="799.2" r="3.7"/></g><path d="M37.3 799 L42.8 786.3" stroke="#2f3e4a" stroke-width="2.6" stroke-linecap="round"/><circle cx="37" cy="878" r="16.2" fill="#fff"/><g fill="none" stroke="#3a4a55" stroke-width="1.6"><ellipse cx="37" cy="878" rx="6.6" ry="16.2"/><path d="M20.5 872.7 H53.5 M20.5 882.3 H53.5"/></g><path d="M38.6 876.4 L22.2 881 L27.6 885.6 L21.6 891.2 Q20.8 893.4 23.6 893.6 L29.4 887.6 L34.6 893.2 Z" fill="#fff" stroke="#455963" stroke-width="1.8" stroke-linejoin="round"/></svg>
<svg style="position:absolute;left:850px;top:1295px" width="46" height="46" viewBox="850 1295 46 46"><g transform="translate(873,1317.2) scale(1.0)"><path d="M-14.4 -8.3 L-7.4 -6.1 L-10.6 -2.3 Z M14.4 -8.3 L7.4 -6.1 L10.6 -2.3 Z M-3.3 11.2 L3.3 11.2 L0 17.3 Z" fill="#3d7a40" stroke="#3d7a40" stroke-width="1" stroke-linejoin="round"/><path d="M0 7.4 C-1.5 9.4 -3.5 10 -6 10 C-9.5 10 -12.8 9.6 -14.3 8.9 C-13.8 4.5 -11 0 -7 -1.8 C-4.5 -2.8 -2 -2 0 -0.4 C2 -2 4.5 -2.8 7 -1.8 C11 0 13.8 4.5 14.3 8.9 C12.8 9.6 9.5 10 6 10 C3.5 10 1.5 9.4 0 7.4 Z" fill="#3d7a40"/><path d="M0 -14.8 C3.6 -11.6 6 -7.8 6 -4.6 C6 -1.6 3.4 0.2 0 0.2 C-3.4 0.2 -6 -1.6 -6 -4.6 C-6 -7.8 -3.6 -11.6 0 -14.8 Z" fill="#3d7a40" stroke="#dff0d8" stroke-width="1.3" paint-order="stroke"/><circle cy="-0.2" r="2.2" fill="#dff0d8"/></g></svg>
</body></html>
